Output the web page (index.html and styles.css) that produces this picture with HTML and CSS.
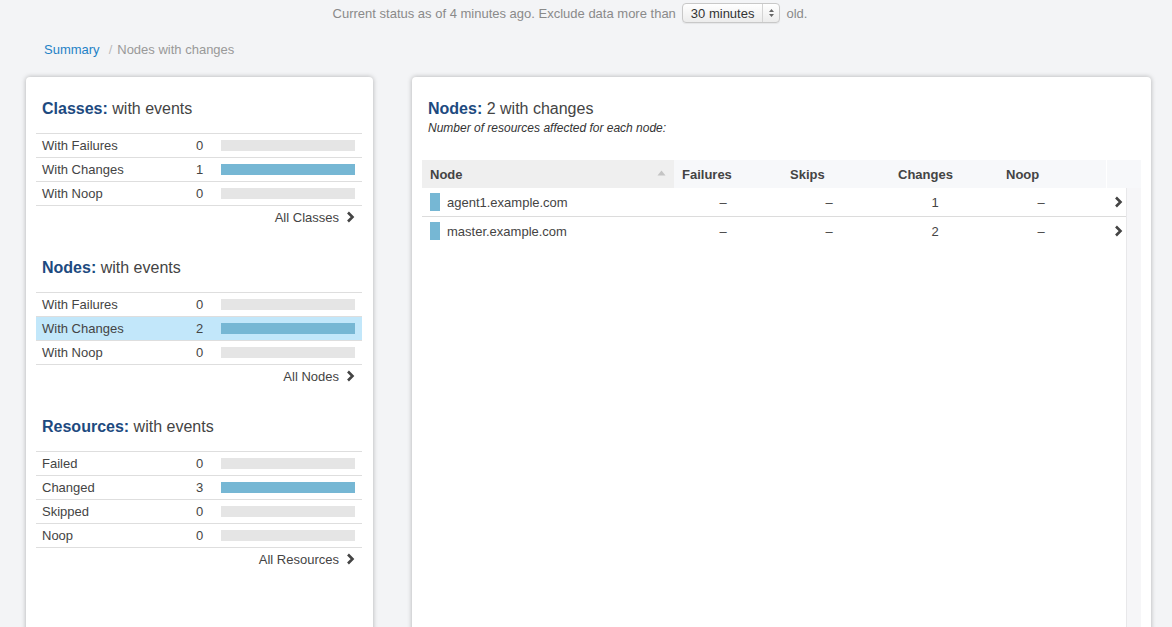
FILE: index.html
```html
<!DOCTYPE html>
<html>
<head>
<meta charset="utf-8">
<title>Nodes with changes</title>
<link rel="stylesheet" href="styles.css">
</head>
<body>
<div class="status">
  <span>Current status as of 4 minutes ago. Exclude data more than</span>
  <span class="select">30 minutes<span class="sel-arrows"><svg width="7" height="10" viewBox="0 0 7 10"><path d="M3.5 1 L6 4 H1 Z M3.5 9 L6 6 H1 Z" fill="#666"/></svg></span></span>
  <span>old.</span>
</div>
<div class="crumbs"><a class="crumb-link">Summary</a><span class="crumb-sep">/</span><span class="crumb-cur">Nodes with changes</span></div>
<div class="main">
  <div class="panel left">
    <div class="section">
      <h2 class="heading"><b>Classes:</b> with events</h2>
      <div class="stats">
        <div class="stat"><span class="lbl">With Failures</span><span class="num">0</span><span class="bar"></span></div>
        <div class="stat"><span class="lbl">With Changes</span><span class="num">1</span><span class="bar"><span class="fill" style="width:100%"></span></span></div>
        <div class="stat"><span class="lbl">With Noop</span><span class="num">0</span><span class="bar"></span></div>
      </div>
      <div class="all">All Classes<svg class="chev" width="9" height="12" viewBox="0 0 9 12"><path d="M2 1.5 L6.5 6 L2 10.5" fill="none" stroke="#444" stroke-width="2.6"/></svg></div>
    </div>
    <div class="section">
      <h2 class="heading"><b>Nodes:</b> with events</h2>
      <div class="stats">
        <div class="stat"><span class="lbl">With Failures</span><span class="num">0</span><span class="bar"></span></div>
        <div class="stat active"><span class="lbl">With Changes</span><span class="num">2</span><span class="bar"><span class="fill" style="width:100%"></span></span></div>
        <div class="stat"><span class="lbl">With Noop</span><span class="num">0</span><span class="bar"></span></div>
      </div>
      <div class="all">All Nodes<svg class="chev" width="9" height="12" viewBox="0 0 9 12"><path d="M2 1.5 L6.5 6 L2 10.5" fill="none" stroke="#444" stroke-width="2.6"/></svg></div>
    </div>
    <div class="section">
      <h2 class="heading"><b>Resources:</b> with events</h2>
      <div class="stats">
        <div class="stat"><span class="lbl">Failed</span><span class="num">0</span><span class="bar"></span></div>
        <div class="stat"><span class="lbl">Changed</span><span class="num">3</span><span class="bar"><span class="fill" style="width:100%"></span></span></div>
        <div class="stat"><span class="lbl">Skipped</span><span class="num">0</span><span class="bar"></span></div>
        <div class="stat"><span class="lbl">Noop</span><span class="num">0</span><span class="bar"></span></div>
      </div>
      <div class="all">All Resources<svg class="chev" width="9" height="12" viewBox="0 0 9 12"><path d="M2 1.5 L6.5 6 L2 10.5" fill="none" stroke="#444" stroke-width="2.6"/></svg></div>
    </div>
  </div>
  <div class="panel right">
    <h2 class="heading"><b>Nodes:</b> 2 with changes</h2>
    <p class="sub">Number of resources affected for each node:</p>
    <div class="grid">
      <div class="thead">
        <div class="th th-node">Node<svg class="sort" width="9" height="6" viewBox="0 0 9 6"><path d="M4.5 0.5 L8.5 5.5 H0.5 Z" fill="#c4c4c4"/></svg></div>
        <div class="th">Failures</div>
        <div class="th">Skips</div>
        <div class="th">Changes</div>
        <div class="th">Noop</div>
        <div class="th th-scroll"></div>
      </div>
      <div class="tbody-wrap">
        <div class="tbody">
          <div class="tr">
            <div class="td td-node"><span class="mark"></span>agent1.example.com</div>
            <div class="td">–</div>
            <div class="td">–</div>
            <div class="td">1</div>
            <div class="td">–</div>
            <div class="td td-chev"><svg width="9" height="12" viewBox="0 0 9 12"><path d="M2 1.5 L6.5 6 L2 10.5" fill="none" stroke="#444" stroke-width="2.6"/></svg></div>
          </div>
          <div class="tr last">
            <div class="td td-node"><span class="mark"></span>master.example.com</div>
            <div class="td">–</div>
            <div class="td">–</div>
            <div class="td">2</div>
            <div class="td">–</div>
            <div class="td td-chev"><svg width="9" height="12" viewBox="0 0 9 12"><path d="M2 1.5 L6.5 6 L2 10.5" fill="none" stroke="#444" stroke-width="2.6"/></svg></div>
          </div>
        </div>
        <div class="scrollbar"></div>
      </div>
    </div>
  </div>
</div>
</body>
</html>
```
FILE: styles.css
```css
html, body {
  margin: 0;
  padding: 0;
  height: 627px;
  overflow: hidden;
}
body {
  background: #f3f4f6;
  font-family: "Liberation Sans", Arial, Helvetica, sans-serif;
  font-size: 13px;
  color: #444;
}
.status {
  display: flex;
  align-items: center;
  justify-content: center;
  gap: 4px;
  height: 26px;
  padding-right: 32px;
  color: #8a8a8a;
}
.select {
  display: inline-flex;
  align-items: center;
  height: 18px;
  padding: 0 0 0 8px;
  margin: 0 2px;
  border: 1px solid #c8c8c8;
  border-radius: 4px;
  background: linear-gradient(#ffffff, #ececec);
  color: #333;
  font-size: 13px;
  box-shadow: 0 1px 1px rgba(0,0,0,0.06);
}
.sel-arrows {
  display: inline-flex;
  align-items: center;
  justify-content: center;
  width: 16px;
  height: 18px;
  margin-left: 8px;
  border-left: 1px solid #d4d4d4;
}
.crumbs {
  display: flex;
  align-items: center;
  height: 20px;
  margin: 13px 0 0 30px;
  padding-left: 14px;
  color: #999;
}
.crumb-link {
  color: #1f82c6;
}
.crumb-sep {
  color: #bbb;
  margin: 0 5px 0 9px;
}
.main {
  display: flex;
  gap: 39px;
  margin: 18px 0 0 26px;
}
.panel {
  background: #fff;
  border-radius: 4px;
  box-shadow: 0 0 5px rgba(0,0,0,0.28);
  height: 640px;
  box-sizing: border-box;
}
.left {
  width: 347px;
  padding: 22px 11px 0 10px;
}
.right {
  width: 739px;
  padding: 22px 10px 0 10px;
}
.heading {
  margin: 0;
  padding-left: 6px;
  font-size: 16px;
  line-height: 20px;
  font-weight: normal;
  color: #444;
}
.heading b {
  color: #1d4a80;
  font-weight: bold;
}
.section {
  margin-bottom: 31px;
}
.section:last-child {
  margin-bottom: 0;
}
.stats {
  margin-top: 14px;
  border-top: 1px solid #dedede;
}
.stat {
  display: grid;
  grid-template-columns: 154px 25px 1fr;
  align-items: center;
  height: 23px;
  padding: 0 7px 0 6px;
  border-bottom: 1px solid #dedede;
}
.stat.active {
  background: #c2e7fa;
}
.num {
  color: #444;
}
.bar {
  display: block;
  height: 11px;
  background: #e5e5e5;
}
.fill {
  display: block;
  height: 100%;
  background: #76b7d4;
}
.all {
  display: flex;
  justify-content: flex-end;
  align-items: center;
  gap: 7px;
  height: 20px;
  padding-right: 7px;
  margin-top: 1px;
  color: #444;
}
.sub {
  margin: 0;
  padding-left: 6px;
  font-style: italic;
  font-size: 12px;
  line-height: 18px;
  color: #333;
}
.grid {
  margin-top: 23px;
}
.thead {
  display: flex;
  height: 28px;
}
.th {
  display: flex;
  align-items: center;
  width: 108px;
  box-sizing: border-box;
  padding-left: 8px;
  background: #f7f8fa;
  font-weight: bold;
  color: #444;
}
.th-node {
  width: 252px;
  background: #efefef;
  justify-content: space-between;
  padding-right: 8px;
}
.sort {
  margin-top: -2px;
}
.th-scroll {
  width: 34px;
  margin-left: 1px;
  padding: 0;
}
.tbody-wrap {
  display: flex;
  height: 500px;
}
.tbody {
  width: 704px;
}
.tr {
  display: flex;
  height: 28px;
  border-bottom: 1px solid #dcdcdc;
}
.tr.last {
  border-bottom: none;
}
.td {
  display: flex;
  align-items: center;
  justify-content: center;
  width: 106px;
  color: #444;
}
.td-node {
  width: 248px;
  justify-content: flex-start;
  padding-left: 8px;
  box-sizing: border-box;
}
.mark {
  display: inline-block;
  width: 10px;
  height: 18px;
  margin-right: 7px;
  background: #76b7d4;
}
.td-chev {
  width: 32px;
  justify-content: flex-end;
  padding-right: 3px;
  box-sizing: border-box;
}
.scrollbar {
  width: 15px;
  background: #f6f6f8;
  border-left: 1px solid #e8e8ea;
  box-sizing: border-box;
}
```
